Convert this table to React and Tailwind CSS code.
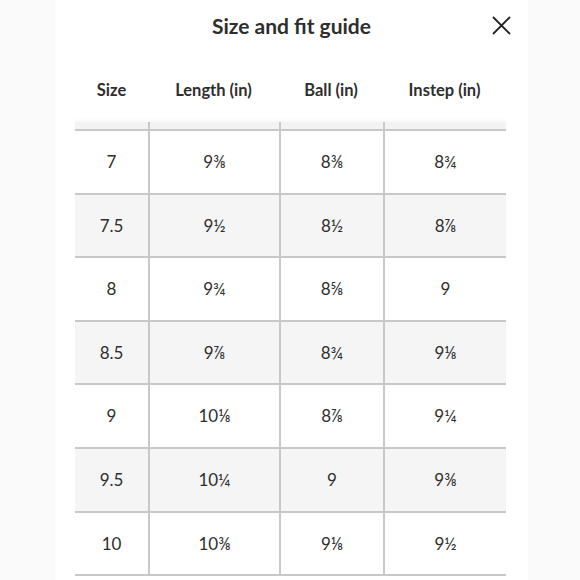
import React from "react";

const rows = [
  ["7", "9⅜", "8⅜", "8¾"],
  ["7.5", "9½", "8½", "8⅞"],
  ["8", "9¾", "8⅝", "9"],
  ["8.5", "9⅞", "8¾", "9⅛"],
  ["9", "10⅛", "8⅞", "9¼"],
  ["9.5", "10¼", "9", "9⅜"],
  ["10", "10⅜", "9⅛", "9½"],
];

const cols = "grid grid-cols-[73px_131px_104px_123px]";

const App = () => {
  return (
    <div
      className="w-[580px] h-[580px] overflow-hidden bg-[#fafafa] text-[#2e2e2e]"
      style={{ fontFamily: "Lato, 'Open Sans', sans-serif" }}
    >
      <div className="ml-[55px] w-[473px] h-full bg-white">
        <div className="relative flex items-center justify-center h-[52px]">
          <h1 className="text-[21px] font-bold">Size and fit guide</h1>
          <button className="absolute right-[16px] top-[15px] w-[21px] h-[21px] flex items-center justify-center">
            <svg width="21" height="21" viewBox="0 0 21 21" fill="none" stroke="#222" strokeWidth="1.8">
              <path d="M2 2L19 19M19 2L2 19" />
            </svg>
          </button>
        </div>

        <div className="pl-[20px]">
          <div className={`${cols} h-[70px] pt-[6px] items-center text-[16.5px] font-bold text-center`}>
            <span>Size</span>
            <span>Length (in)</span>
            <span>Ball (in)</span>
            <span>Instep (in)</span>
          </div>

          <div className="w-[431px]">
            <div className={`${cols} h-[9px] bg-[#f3f3f3] border-b-2 border-[#c8c8c8] shadow-[0_-2px_4px_rgba(0,0,0,0.03)]`}>
              <div />
              <div className="border-l-2 border-[#c8c8c8]" />
              <div className="border-l-2 border-[#c8c8c8]" />
              <div className="border-l-2 border-[#c8c8c8]" />
            </div>
            {rows.map((row, i) => (
              <div
                key={i}
                className={`${cols} h-[63.6px] border-b-2 border-[#c8c8c8] text-[17px] ${
                  i % 2 === 1 ? "bg-[#f5f5f5]" : "bg-white"
                }`}
              >
                {row.map((cell, j) => (
                  <div
                    key={j}
                    className={`flex items-center justify-center ${j > 0 ? "border-l-2 border-[#c8c8c8]" : ""}`}
                  >
                    {cell}
                  </div>
                ))}
              </div>
            ))}
          </div>
        </div>
      </div>
    </div>
  );
};

export default App;
